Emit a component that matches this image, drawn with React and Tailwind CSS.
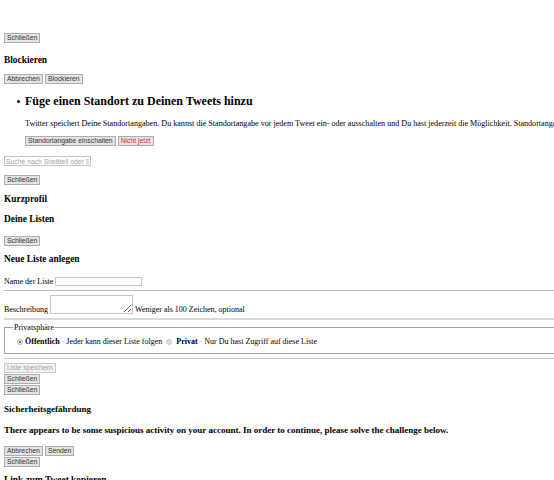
import React from "react";

function Btn({ children, className = "" }) {
  return (
    <button
      type="button"
      className={
        "h-[10px] shrink-0 border border-[#acacac] bg-[#e4e4e4] px-[2px] font-['Liberation_Sans',Arial,sans-serif] text-[6.8px] leading-none text-[#333] " +
        className
      }
    >
      {children}
    </button>
  );
}

function Radio({ checked }) {
  return checked ? (
    <span className="flex h-[6px] w-[6px] shrink-0 items-center justify-center rounded-full border border-[#b4b4b4] bg-[#f0f0f0]">
      <span className="block h-[2px] w-[2px] rounded-full bg-[#444]" />
    </span>
  ) : (
    <span className="block h-[6px] w-[6px] shrink-0 rounded-full border border-[#c8c8c8] bg-[#dedede]" />
  );
}

export default function App() {
  return (
    <div className="h-[480px] w-[554px] overflow-hidden bg-white font-['Liberation_Serif','Times_New_Roman',serif] text-[8px] text-black">
      <div className="flex w-[640px] flex-col items-start px-[4px] pt-[33px]">
        <Btn>Schließen</Btn>

        <h3 className="mt-[12px] h-[11px] text-[9.4px] font-bold leading-[11px]">Blockieren</h3>

        <div className="mt-[8px] flex gap-[2px]">
          <Btn>Abbrechen</Btn>
          <Btn>Blockieren</Btn>
        </div>

        <div className="mt-[10px] flex flex-col items-start pl-[21px]">
          <div className="relative h-[14px]">
            <span className="absolute left-[-8px] top-[6px] h-[2.5px] w-[2.5px] rounded-full bg-black" />
            <h2 className="whitespace-nowrap text-[12px] font-bold leading-[14px]">
              Füge einen Standort zu Deinen Tweets hinzu
            </h2>
          </div>
          <p className="mt-[11px] h-[9px] whitespace-nowrap text-[8.1px] leading-[9px]">
            Twitter speichert Deine Standortangaben. Du kannst die Standortangabe vor jedem Tweet ein- oder ausschalten und Du hast jederzeit die Möglichkeit, Standortangaben zu löschen.
          </p>
          <div className="mt-[8px] flex gap-[2px]">
            <Btn>Standortangabe einschalten</Btn>
            <Btn className="text-[#d42a2a]">Nicht jetzt</Btn>
          </div>
        </div>

        <input
          type="text"
          placeholder="Suche nach Stadtteil oder Stadt"
          className="mt-[10px] h-[10px] w-[87px] border border-[#c4c4c4] bg-white px-[1px] font-['Liberation_Sans',Arial,sans-serif] text-[6.8px] leading-none outline-none placeholder:text-[#a4a4a4]"
        />

        <Btn className="mt-[9px]">Schließen</Btn>

        <h3 className="mt-[9px] h-[11px] text-[9.4px] font-bold leading-[11px]">Kurzprofil</h3>
        <h3 className="mt-[9px] h-[11px] text-[9.4px] font-bold leading-[11px]">Deine Listen</h3>

        <Btn className="mt-[11px]">Schließen</Btn>

        <h3 className="mt-[8px] h-[11px] text-[9.4px] font-bold leading-[11px]">Neue Liste anlegen</h3>

        <div className="mt-[12px] flex h-[9px] items-center gap-[2px]">
          <span className="leading-[9px]">Name der Liste</span>
          <input
            type="text"
            className="h-[9px] w-[87px] border border-[#c4c4c4] bg-white outline-none"
          />
        </div>

        <div className="mt-[4px] h-px self-stretch bg-[#b8b8b8]" />

        <div className="mt-[4px] flex items-end gap-[2px]">
          <span className="leading-[9px]">Beschreibung</span>
          <textarea className="block h-[19px] w-[83px] border border-[#c4c4c4] bg-white outline-none" />
          <span className="leading-[9px]">Weniger als 100 Zeichen, optional</span>
        </div>

        <div className="mt-[4px] h-[2px] self-stretch bg-[#d8d8d8]" />

        <fieldset className="mt-[3px] w-[636px] border border-[#a0a0a0] pl-[8px]">
          <legend className="px-[1px] leading-[9px]">Privatsphäre</legend>
          <div className="mb-[7px] mt-[5px] flex h-[9px] items-center whitespace-pre leading-[9px]">
            <span className="ml-[4px]">
              <Radio checked />
            </span>
            <span className="ml-[2px] font-bold">Öffentlich</span>
            <span> </span>
            <span className="text-[#777]">·</span>
            <span> Jeder kann dieser Liste folgen </span>
            <span className="ml-[2px]">
              <Radio />
            </span>
            <span className="ml-[4px] font-bold">Privat</span>
            <span> </span>
            <span className="text-[#777]">·</span>
            <span> Nur Du hast Zugriff auf diese Liste</span>
          </div>
        </fieldset>

        <div className="mt-[4px] h-px self-stretch bg-[#c8c8c8]" />

        <Btn className="mt-[4px] border-[#c8c8c8] bg-[#f2f2f2] text-[#a0a0a0]">Liste speichern</Btn>
        <Btn className="mt-[1px]">Schließen</Btn>
        <Btn className="mt-[1px]">Schließen</Btn>

        <h3 className="mt-[9px] h-[11px] text-[9px] font-bold leading-[11px]">Sicherheitsgefährdung</h3>

        <h3 className="mt-[10px] h-[11px] whitespace-nowrap text-[9px] font-bold leading-[11px]">
          There appears to be some suspicious activity on your account. In order to continue, please solve the challenge below.
        </h3>

        <div className="mt-[10px] flex gap-[2px]">
          <Btn>Abbrechen</Btn>
          <Btn>Senden</Btn>
        </div>
        <Btn className="mt-[1px]">Schließen</Btn>

        <h3 className="mt-[8px] h-[11px] text-[9.4px] font-bold leading-[11px]">Link zum Tweet kopieren</h3>
      </div>
    </div>
  );
}
